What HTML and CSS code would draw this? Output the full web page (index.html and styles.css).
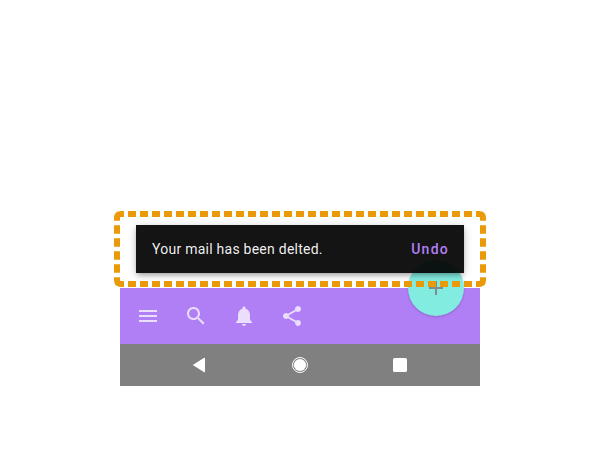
FILE: index.html
```
<!DOCTYPE html>
<html lang="en">
<head>
<meta charset="utf-8">
<title>Snackbar</title>
<link rel="stylesheet" href="styles.css">
</head>
<body>
<main class="screen">
  <div class="snackbar">
    <span class="message">Your mail has been delted.</span>
    <span class="action">Undo</span>
  </div>
  <div class="app-bar">
    <svg class="icon" viewBox="0 0 24 24"><path d="M3 18h18v-2H3v2zm0-5h18v-2H3v2zm0-7v2h18V6H3z"/></svg>
    <svg class="icon" viewBox="0 0 24 24"><path d="M15.5 14h-.79l-.28-.27C15.41 12.59 16 11.11 16 9.5 16 5.91 13.09 3 9.5 3S3 5.91 3 9.5 5.91 16 9.5 16c1.61 0 3.09-.59 4.23-1.57l.27.28v.79l5 4.99L20.49 19l-4.99-5zm-6 0C7.01 14 5 11.99 5 9.5S7.01 5 9.5 5 14 7.01 14 9.5 11.99 14 9.5 14z"/></svg>
    <svg class="icon" viewBox="0 0 24 24"><path d="M12 22c1.1 0 2-.9 2-2h-4c0 1.1.89 2 2 2zm6-6v-5c0-3.07-1.64-5.64-4.5-6.32V4c0-.83-.67-1.5-1.5-1.5s-1.5.67-1.5 1.5v.68C7.63 5.36 6 7.92 6 11v5l-2 2v1h16v-1l-2-2z"/></svg>
    <svg class="icon" viewBox="0 0 24 24"><path d="M18 16.08c-.76 0-1.44.3-1.96.77L8.91 12.7c.05-.23.09-.46.09-.7s-.04-.47-.09-.7l7.05-4.11c.54.5 1.25.81 2.04.81 1.66 0 3-1.34 3-3s-1.34-3-3-3-3 1.34-3 3c0 .24.04.47.09.7L8.04 9.81C7.5 9.31 6.79 9 6 9c-1.66 0-3 1.34-3 3s1.34 3 3 3c.79 0 1.5-.31 2.04-.81l7.12 4.16c-.05.21-.08.43-.08.65 0 1.61 1.31 2.92 2.92 2.92s2.92-1.31 2.92-2.92-1.31-2.92-2.92-2.92z"/></svg>
    <div class="fab">
      <svg class="fab-icon" viewBox="0 0 24 24"><path d="M19 13h-6v6h-2v-6H5v-2h6V5h2v6h6v2z"/></svg>
    </div>
  </div>
  <div class="nav-bar">
    <svg class="nav-icon" viewBox="0 0 24 24"><path d="M4.8 12L15.8 5.1Q17 4.4 17 5.8V18.2Q17 19.6 15.8 18.9Z"/></svg>
    <svg class="nav-icon" viewBox="0 0 24 24"><circle cx="12" cy="12" r="6.1"/><circle class="ring" cx="12" cy="12" r="7.5"/></svg>
    <svg class="nav-icon" viewBox="0 0 24 24"><rect x="5" y="5" width="14" height="14" rx="1.6"/></svg>
  </div>
  <svg class="highlight" viewBox="0 0 372 76">
    <path d="M3 9.83V7Q3 3 7 3H10M362 3H365Q369 3 369 7V9.83M369 66.17V69Q369 73 365 73H362M10 73H7Q3 73 3 69V66.17"/>
    <path class="dash-h" d="M14 3H358M14 73H358"/>
    <path class="dash-v" d="M3 14.17V61.83M369 14.17V61.83"/>
  </svg>
</main>
</body>
</html>
```

FILE: styles.css
```
body {
  margin: 0;
  background: #fff;
  font-family: Roboto, "Liberation Sans", sans-serif;
}

.screen {
  position: relative;
  width: 360px;
  margin: 0 auto;
  padding-top: 225px;
}

.snackbar {
  position: relative;
  z-index: 2;
  display: flex;
  align-items: center;
  justify-content: space-between;
  box-sizing: border-box;
  height: 48px;
  margin: 0 16px 15px;
  padding: 0 15px 0 16px;
  background: rgba(0, 0, 0, 0.92);
  box-shadow: 0 3px 5px -1px rgba(0, 0, 0, 0.3), 0 1px 10px rgba(0, 0, 0, 0.14);
  font-size: 14px;
  line-height: 20px;
}

.message {
  color: rgba(255, 255, 255, 0.94);
  letter-spacing: 0.25px;
}

.action {
  color: #b07ff5;
  font-weight: 500;
  letter-spacing: 1.25px;
}

.app-bar {
  position: relative;
  display: flex;
  align-items: center;
  gap: 24px;
  height: 56px;
  padding-left: 16px;
  background: #b07ff5;
}

.icon {
  width: 24px;
  height: 24px;
  fill: rgba(255, 255, 255, 0.74);
}

.fab {
  position: absolute;
  top: -28px;
  right: 16px;
  display: flex;
  align-items: center;
  justify-content: center;
  width: 56px;
  height: 56px;
  border-radius: 50%;
  background: #82ece1;
  box-shadow: 0 1px 3px rgba(0, 0, 0, 0.18);
}

.fab-icon {
  width: 24px;
  height: 24px;
  fill: #808c8a;
}

.nav-bar {
  display: flex;
  align-items: center;
  justify-content: space-between;
  height: 42px;
  padding: 0 68px;
  background: #808080;
}

.nav-icon {
  width: 24px;
  height: 24px;
  fill: #fff;
}

.ring {
  fill: none;
  stroke: #fff;
  stroke-width: 1;
}

.highlight {
  position: absolute;
  z-index: 3;
  top: 211px;
  left: -6px;
  width: 372px;
  height: 76px;
  fill: none;
  stroke: #ea9a08;
  stroke-width: 6;
}

.dash-h {
  stroke-dasharray: 8 4;
}

.dash-v {
  stroke-dasharray: 8.66 4.34;
}
```
